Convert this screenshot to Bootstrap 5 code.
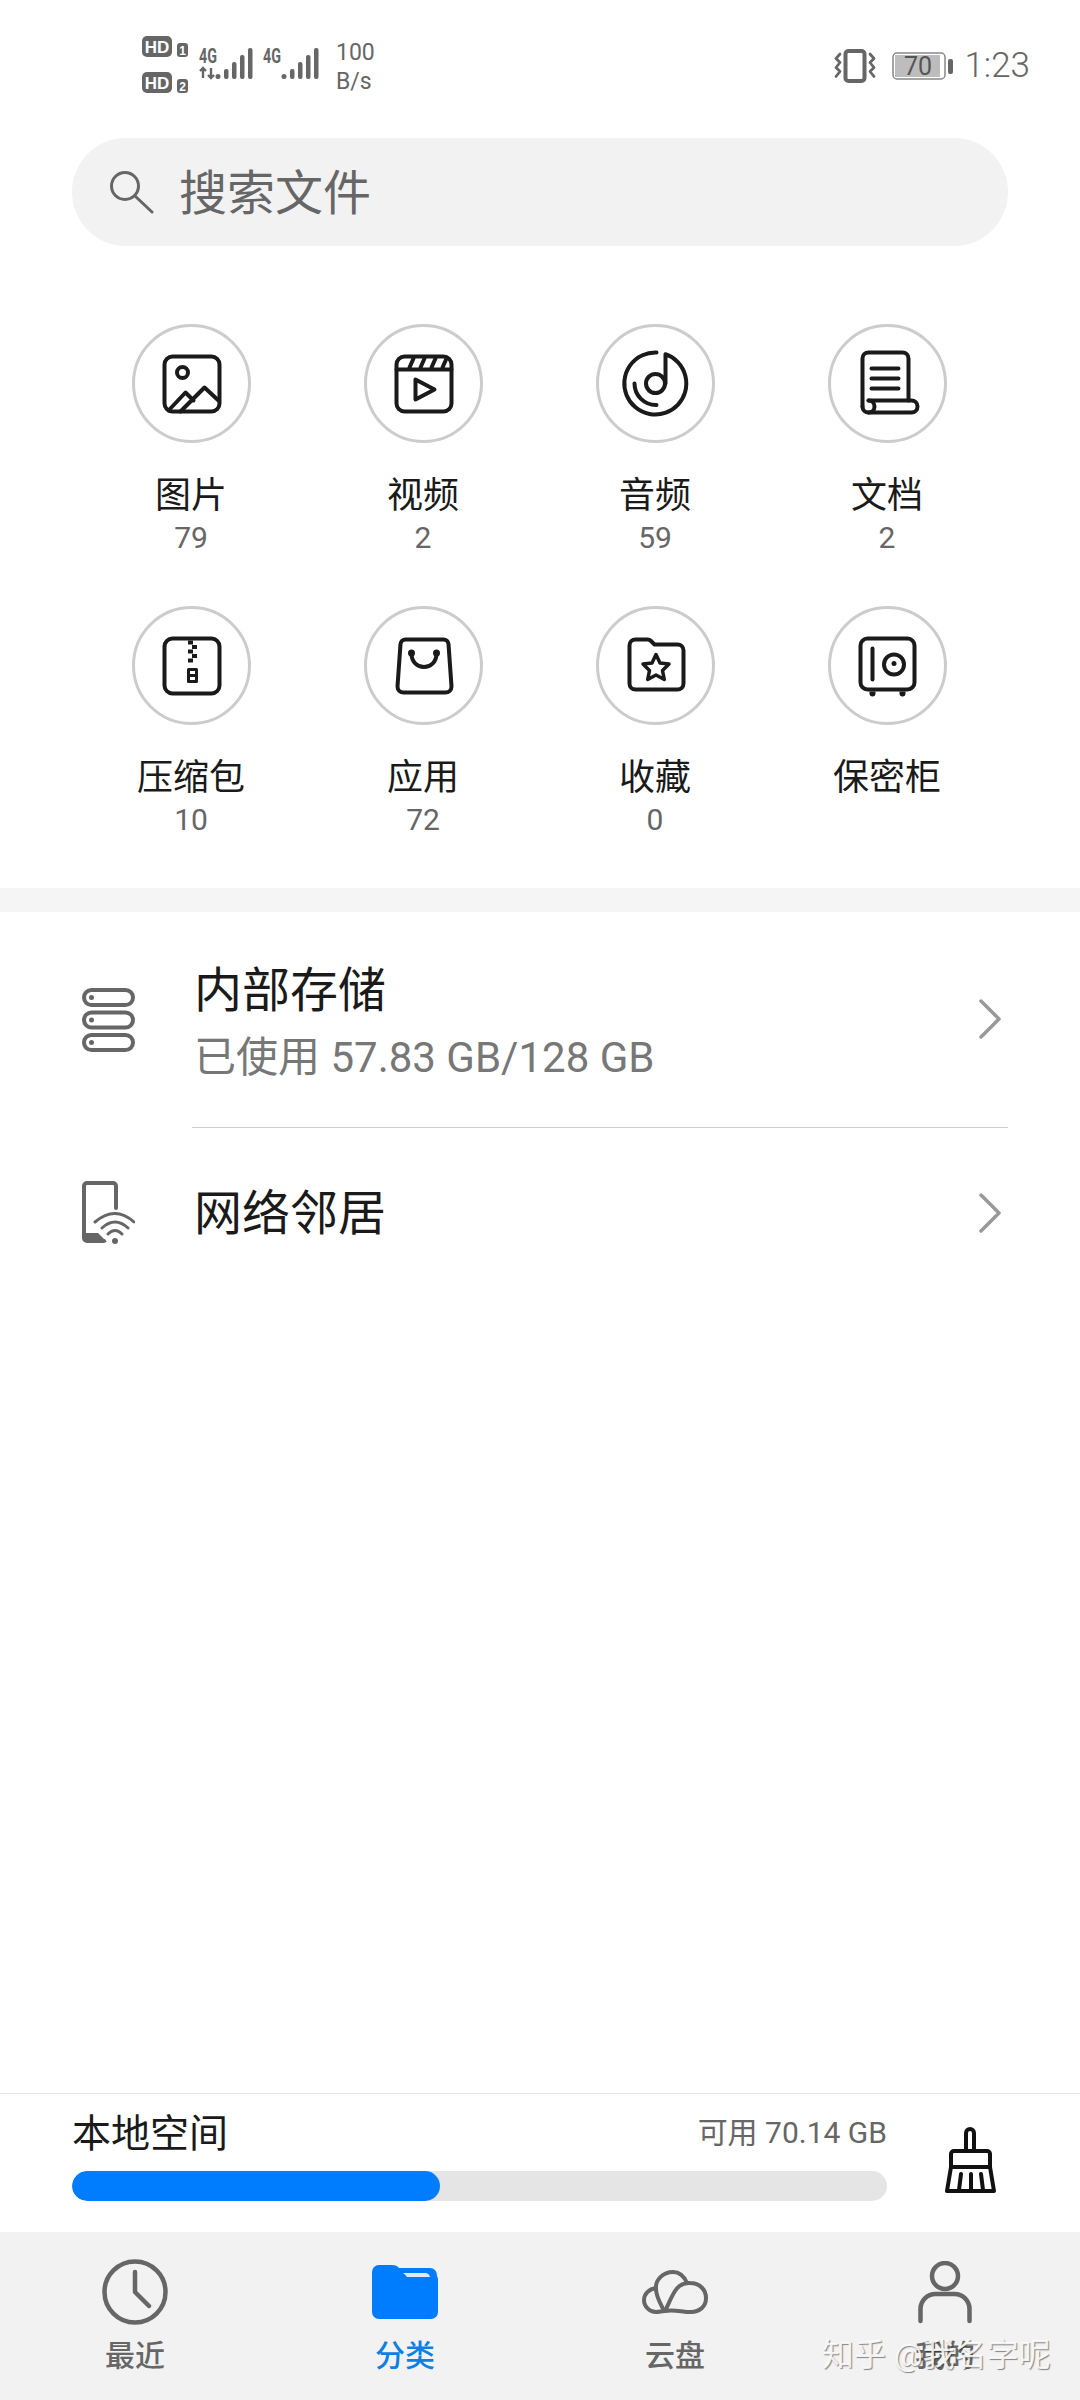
<!DOCTYPE html>
<html lang="zh-CN">
<head>
<meta charset="utf-8">
<title>文件管理</title>
<link href="https://cdn.jsdelivr.net/npm/bootstrap@5.3.0/dist/css/bootstrap.min.css" rel="stylesheet">
<style>
html,body{width:1080px;height:2400px;margin:0;background:#fff;overflow:hidden}
body{font-family:Roboto,"Noto Sans CJK SC",sans-serif;color:#1a1a1a}
svg{display:block}
.page{width:1080px;height:2400px}
.status{height:130px;padding:2px 50px 0 142px;color:#666}
.speed{font-size:23px;line-height:29px;margin-left:4px;padding-top:2px}
.clock{font-size:35px;line-height:40px;margin-left:10px;font-weight:300}
.ic-black{fill:none;stroke:#1a1a1a;stroke-width:4;stroke-linecap:round;stroke-linejoin:round}
.ic-grey{fill:none;stroke:#666;stroke-width:4;stroke-linecap:round;stroke-linejoin:round}
.search{height:108px;margin:8px 72px 0;background:#f2f2f2;border-radius:54px;padding-left:38px;color:#666;font-size:48px;line-height:60px}
.search svg{margin-right:25px;margin-top:2px}
.search span{padding-top:4px}
.cats{margin:78px 0 0;padding:0 77px 0 75px}
.cat{height:282px}
.ring{width:119px;height:119px;border:3px solid #ccc;border-radius:50%}
.cat-name{font-size:36px;line-height:48px;margin-top:29px;color:#1a1a1a}
.cat-num{font-size:30px;line-height:36px;color:#666}
.band{height:24px;background:#f5f5f5}
.entry-icon{width:192px;padding-left:82px}
.entry-body{margin-right:72px;padding-right:6px}
.entry-a{height:216px;border-bottom:1px solid #ccc;padding-top:49px}
.entry-b{height:170px}
.entry-b .entry-title{padding-top:2px}
.chev-a{margin-top:38px}
.entry-title{font-size:48px;line-height:60px;color:#1a1a1a;padding-left:2px}
.entry-sub{font-size:42px;line-height:50px;margin-top:12px;color:#777;padding-left:2px}
.footbar{height:139px;border-top:1px solid #e5e5e5;padding-left:72px}
.foot-main{width:815px;padding-top:14px}
.foot-title{font-size:39px;line-height:50px;color:#1a1a1a;padding-top:1px}
.foot-free{font-size:30px;line-height:50px;color:#666}
.meter{height:30px;border-radius:15px;background:#e5e5e5;margin-top:12px}
.meter .progress-bar{background:#007dff;border-radius:15px}
.broom{margin:33px 0 0 58px}
.tabs{height:168px;background:#f2f2f2}
.tab{font-size:30px;line-height:46px;font-weight:500;color:#666;padding-top:20px}
.tab-box{height:80px;margin-bottom:1px}
.tab-on{color:#0f7fe3}
.tabs .mark-wm{position:absolute;left:822px;top:99px;width:auto;padding:0;font-size:32px;line-height:48px;white-space:nowrap;color:rgba(255,255,255,.88);text-shadow:1px 1px 1px rgba(0,0,0,.45)}
</style>
</head>
<body>
<div class="page d-flex flex-column">

  <div class="status d-flex align-items-center flex-shrink-0">
    <svg width="48" height="60" viewBox="0 0 48 60" font-family="Liberation Sans, sans-serif" font-weight="700" text-anchor="middle">
      <rect x="0" y="0" width="30" height="21" rx="5" fill="#666"/><text x="15" y="17" font-size="17" fill="#fff">HD</text>
      <rect x="35" y="7" width="11" height="14" rx="3" fill="#666"/><text x="40.5" y="19" font-size="12" fill="#fff">1</text>
      <rect x="0" y="36" width="30" height="21" rx="5" fill="#666"/><text x="15" y="53" font-size="17" fill="#fff">HD</text>
      <rect x="35" y="43" width="11" height="14" rx="3" fill="#666"/><text x="40.5" y="55" font-size="12" fill="#fff">2</text>
    </svg>
    <svg class="ms-2" width="134" height="60" viewBox="0 -10 134 60" font-family="Roboto, sans-serif" font-weight="700" fill="#666">
      <text x="1" y="17" font-size="20" textLength="18" lengthAdjust="spacingAndGlyphs">4G</text>
      <path d="M5 32V22M2 25l3-3 3 3M13 22v10M10 29l3 3 3-3" fill="none" stroke="#666" stroke-width="2.4"/>
      <circle cx="20" cy="30.500" r="2.500"/>
      <rect x="26" y="23" width="4.500" height="10" rx="2"/><rect x="34" y="16" width="4.500" height="17" rx="2"/><rect x="42" y="9" width="4.500" height="24" rx="2"/><rect x="50" y="2" width="4.500" height="31" rx="2"/>
      <text x="65" y="17" font-size="20" textLength="18" lengthAdjust="spacingAndGlyphs">4G</text>
      <circle cx="86" cy="30.500" r="2.500"/>
      <rect x="92" y="23" width="4.500" height="10" rx="2"/><rect x="100" y="16" width="4.500" height="17" rx="2"/><rect x="108" y="9" width="4.500" height="24" rx="2"/><rect x="116" y="2" width="4.500" height="31" rx="2"/>
    </svg>
    <div class="speed text-start">100<br>B/s</div>
    <div class="ms-auto d-flex align-items-center">
      <svg width="42" height="34" viewBox="0 0 42 34" class="ic-grey">
        <rect x="11.500" y="2" width="19" height="30" rx="3"/>
        <path d="M6 5 2 9.500l4 4-4 5 4 4-4 5M36 5l4 4.500-4 4 4 5-4 4 4 5" stroke-width="2.800"/>
      </svg>
      <svg class="ms-3" width="62" height="28" viewBox="0 0 62 28">
        <rect x="1" y="1" width="52" height="26" rx="4" fill="#fff" stroke="#888" stroke-width="1.500"/>
        <rect x="3" y="3" width="45" height="22" fill="#bdbdbd"/>
        <text x="26" y="23" font-family="Roboto, sans-serif" font-size="25" text-anchor="middle" fill="#555">70</text>
        <rect x="56" y="7" width="5" height="15" rx="2" fill="#666"/>
      </svg>
      <div class="clock">1:23</div>
    </div>
  </div>

  <div class="search d-flex align-items-center flex-shrink-0">
    <svg width="44" height="44" viewBox="0 0 44 44" class="ic-grey" style="stroke-width:3"><circle cx="15" cy="15" r="13.500"/><path d="M25 25 42 41"/></svg>
    <span>搜索文件</span>
  </div>

  <div class="row g-0 cats flex-shrink-0">
    <div class="col-3 cat d-flex flex-column align-items-center">
      <div class="ring d-flex align-items-center justify-content-center">
        <svg width="113" height="113" viewBox="3.500 3.500 113 113" class="ic-black">
          <rect x="33" y="33" width="55" height="55" rx="8"/><circle cx="51" cy="49" r="5.500"/>
          <path d="M37 87 54 69l8 8M49 88 73 64l14 13"/>
        </svg>
      </div>
      <div class="cat-name">图片</div><div class="cat-num">79</div>
    </div>
    <div class="col-3 cat d-flex flex-column align-items-center">
      <div class="ring d-flex align-items-center justify-content-center">
        <svg width="113" height="113" viewBox="3.500 3.500 113 113" class="ic-black">
          <rect x="33" y="33" width="55" height="55" rx="8"/><path d="M33 46H88M50 35l-4 9M61 35l-4 9M72 35l-4 9M83 35l-4 9"/>
          <path d="M52 56V76L71 66Z"/>
        </svg>
      </div>
      <div class="cat-name">视频</div><div class="cat-num">2</div>
    </div>
    <div class="col-3 cat d-flex flex-column align-items-center">
      <div class="ring d-flex align-items-center justify-content-center">
        <svg width="113" height="113" viewBox="3.500 3.500 113 113" class="ic-black">
          <path d="M61 29A31 31 0 1 0 70 30.700V60"/><circle cx="60" cy="60" r="9.500"/><path d="M39 60A21.500 21.500 0 0 0 61 81.500"/>
        </svg>
      </div>
      <div class="cat-name">音频</div><div class="cat-num">59</div>
    </div>
    <div class="col-3 cat d-flex flex-column align-items-center">
      <div class="ring d-flex align-items-center justify-content-center">
        <svg width="113" height="113" viewBox="3.500 3.500 113 113" class="ic-black">
          <path d="M35 83V35a6 6 0 0 1 6-6H75a6 6 0 0 1 6 6V77"/>
          <path d="M41 77H84a6 6 0 0 1 0 12H41a6 6 0 0 1-6-6"/><path d="M41 77a6 6 0 0 1 6 6 6 6 0 0 1-6 6"/>
          <path d="M44 45H71M44 55H71M44 65H71"/>
        </svg>
      </div>
      <div class="cat-name">文档</div><div class="cat-num">2</div>
    </div>
    <div class="col-3 cat d-flex flex-column align-items-center">
      <div class="ring d-flex align-items-center justify-content-center">
        <svg width="113" height="113" viewBox="3.500 3.500 113 113" class="ic-black">
          <rect x="33" y="33" width="55" height="55" rx="8"/>
          <path d="M56.500 35h5v4h-5zM60.500 39.500h5v4h-5zM56.500 44h5v4h-5zM60.500 48.500h5v4h-5zM56.500 53h5v4h-5z" fill="#1a1a1a" stroke="none"/>
          <path d="M57 64h8v12h-8zM57 70h8" stroke-width="3"/>
        </svg>
      </div>
      <div class="cat-name">压缩包</div><div class="cat-num">10</div>
    </div>
    <div class="col-3 cat d-flex flex-column align-items-center">
      <div class="ring d-flex align-items-center justify-content-center">
        <svg width="113" height="113" viewBox="3.500 3.500 113 113" class="ic-black">
          <path d="M42 34H80a5 5 0 0 1 5 4.500L88 81a6 6 0 0 1-6 6H40a6 6 0 0 1-6-6L37 38.500A5 5 0 0 1 42 34Z"/>
          <path d="M48 48C48 66 73 66 73 48"/><circle cx="48" cy="47.500" r="2.500" fill="#1a1a1a" stroke-width="2"/><circle cx="73" cy="47.500" r="2.500" fill="#1a1a1a" stroke-width="2"/>
        </svg>
      </div>
      <div class="cat-name">应用</div><div class="cat-num">72</div>
    </div>
    <div class="col-3 cat d-flex flex-column align-items-center">
      <div class="ring d-flex align-items-center justify-content-center">
        <svg width="113" height="113" viewBox="3.500 3.500 113 113" class="ic-black">
          <path d="M40 34H52q2 0 3.500 1.500L59 39H82a6 6 0 0 1 6 6V78a6 6 0 0 1-6 6H40a6 6 0 0 1-6-6V40a6 6 0 0 1 6-6Z"/>
          <path d="M60.500 49 64.500 57.500 73.500 58.500 67 65 68.800 74 60.500 69.500 52.200 74 54 65 47.500 58.500 56.500 57.500Z" stroke-width="3.500"/>
        </svg>
      </div>
      <div class="cat-name">收藏</div><div class="cat-num">0</div>
    </div>
    <div class="col-3 cat d-flex flex-column align-items-center">
      <div class="ring d-flex align-items-center justify-content-center">
        <svg width="113" height="113" viewBox="3.500 3.500 113 113" class="ic-black">
          <rect x="33" y="33" width="54" height="51" rx="7"/><path d="M45 43V74"/><circle cx="66.500" cy="59" r="10"/>
          <circle cx="66.500" cy="58" r="2.500" fill="#1a1a1a" stroke="none"/>
          <path d="M42 86h6v2a3 3 0 0 1-6 0zM72 86h6v2a3 3 0 0 1-6 0z" fill="#1a1a1a" stroke="none"/>
        </svg>
      </div>
      <div class="cat-name">保密柜</div>
    </div>
  </div>

  <div class="band flex-shrink-0"></div>

  <div class="d-flex flex-shrink-0">
    <div class="entry-icon d-flex align-items-center flex-shrink-0">
      <svg width="53" height="65" viewBox="0 0 53 65" class="ic-grey">
        <rect x="2" y="2" width="49" height="15" rx="7.500"/><rect x="2" y="24.500" width="49" height="15" rx="7.500"/><rect x="2" y="47" width="49" height="15" rx="7.500"/>
        <circle cx="9.500" cy="9.500" r="2.500" fill="#666" stroke="none"/><circle cx="9.500" cy="32" r="2.500" fill="#666" stroke="none"/><circle cx="9.500" cy="54.500" r="2.500" fill="#666" stroke="none"/>
      </svg>
    </div>
    <div class="entry-body entry-a flex-grow-1 d-flex justify-content-between align-items-start">
      <div>
        <div class="entry-title">内部存储</div>
        <div class="entry-sub">已使用 57.83 GB/128 GB</div>
      </div>
      <svg class="chev-a" width="24" height="40" viewBox="0 0 24 40" fill="none" stroke="#999" stroke-width="3.500" stroke-linecap="round" stroke-linejoin="round"><path d="M3 2 21 20 3 38"/></svg>
    </div>
  </div>

  <div class="d-flex flex-shrink-0">
    <div class="entry-icon d-flex align-items-center flex-shrink-0">
      <svg width="53" height="64" viewBox="0 0 53 64" class="ic-grey">
        <path d="M34 27V5a3 3 0 0 0-3-3H5A3 3 0 0 0 2 5V57a3 3 0 0 0 3 3H22"/>
        <path d="M2 52H16L25 61H4L2 59Z" fill="#666" stroke="none"/>
        <path d="M13 41Q33 24 52 41M20 47Q33 35 46 47M26 53Q33 46 40 53" stroke-width="3"/>
        <circle cx="33" cy="60" r="3" fill="#666" stroke="none"/>
      </svg>
    </div>
    <div class="entry-body entry-b flex-grow-1 d-flex justify-content-between align-items-center">
      <div class="entry-title">网络邻居</div>
      <svg width="24" height="40" viewBox="0 0 24 40" fill="none" stroke="#999" stroke-width="3.500" stroke-linecap="round" stroke-linejoin="round"><path d="M3 2 21 20 3 38"/></svg>
    </div>
  </div>

  <div class="flex-grow-1"></div>

  <div class="footbar d-flex flex-shrink-0">
    <div class="foot-main flex-shrink-0">
      <div class="d-flex justify-content-between">
        <div class="foot-title">本地空间</div>
        <div class="foot-free">可用 70.14 GB</div>
      </div>
      <div class="progress meter">
        <div class="progress-bar" role="progressbar" style="width:45.200%" aria-valuenow="45" aria-valuemin="0" aria-valuemax="100"></div>
      </div>
    </div>
    <svg class="broom" width="51" height="66" viewBox="0 0 51 66" fill="none" stroke="#111" stroke-width="4" stroke-linecap="round" stroke-linejoin="round">
      <path d="M21 24V6a4 4 0 0 1 8 0V24M9 24H42a3 3 0 0 1 3 3V40H6V27a3 3 0 0 1 3-3ZM6 40 2 64H49L45 40M16 47 14 63M26 47V63M36 47 38 63" />
    </svg>
  </div>

  <div class="row g-0 tabs position-relative flex-shrink-0">
    <div class="col-3 tab d-flex flex-column align-items-center">
      <div class="tab-box d-flex align-items-center">
        <svg width="66" height="66" viewBox="0 0 66 66" fill="none" stroke="#666" stroke-width="4.500" stroke-linecap="round" stroke-linejoin="round"><circle cx="33" cy="33" r="30.500"/><path d="M33 13V33L47 47"/></svg>
      </div>
      <div>最近</div>
    </div>
    <div class="col-3 tab tab-on d-flex flex-column align-items-center">
      <div class="tab-box d-flex align-items-center">
        <svg width="66" height="54" viewBox="0 0 66 54">
          <path d="M7 0H20Q25 0 27 3H58A7 7 0 0 1 65 10V11A7 7 0 0 1 66 14V47A7 7 0 0 1 59 54H7A7 7 0 0 1 0 47V7A7 7 0 0 1 7 0Z" fill="#007dff"/>
          <path d="M31 8H53Q57 8 58 12H35Q33 9 31 8Z" fill="#dbeaff"/>
        </svg>
      </div>
      <div>分类</div>
    </div>
    <div class="col-3 tab d-flex flex-column align-items-center">
      <div class="tab-box d-flex align-items-center">
        <svg width="66" height="44" viewBox="0 0 66 44" fill="none" stroke="#666" stroke-width="4" stroke-linecap="round" stroke-linejoin="round">
          <path d="M23 41C30 28 33 12 48 13 58 13 64 20 64 28 64 37 57 42 49 42 40 42 32 39 23 41Z"/>
          <path d="M45 13C42 6 37 2 31 2 21 2 13 10 14 19 14 27 19 34 22 41"/>
          <path d="M14 18C7 19 2 24 2 30 2 37 8 42 14 42 17 42 20 41 23 41"/>
        </svg>
      </div>
      <div>云盘</div>
    </div>
    <div class="col-3 tab d-flex flex-column align-items-center">
      <div class="tab-box d-flex align-items-center">
        <svg width="54" height="63" viewBox="0 0 54 63" fill="none" stroke="#666" stroke-width="4.500" stroke-linecap="round" stroke-linejoin="round">
          <circle cx="27" cy="15" r="13"/><path d="M2.500 60V48A15 15 0 0 1 17.500 33H36.500A15 15 0 0 1 51.500 48V60"/>
        </svg>
      </div>
      <div>我的</div>
    </div>
    <div class="mark-wm">知乎 @我名字呢</div>
  </div>

</div>
<script src="https://cdn.jsdelivr.net/npm/bootstrap@5.3.0/dist/js/bootstrap.bundle.min.js"></script>
</body>
</html>
